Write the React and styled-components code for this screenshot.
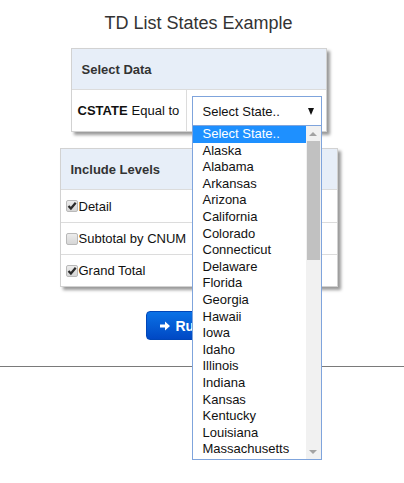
import React from "react";
import styled, { createGlobalStyle } from "styled-components";

const options = [
  "Select State..",
  "Alaska",
  "Alabama",
  "Arkansas",
  "Arizona",
  "California",
  "Colorado",
  "Connecticut",
  "Delaware",
  "Florida",
  "Georgia",
  "Hawaii",
  "Iowa",
  "Idaho",
  "Illinois",
  "Indiana",
  "Kansas",
  "Kentucky",
  "Louisiana",
  "Massachusetts",
];

const levels = [
  { label: "Detail", checked: true },
  { label: "Subtotal by CNUM", checked: false },
  { label: "Grand Total", checked: true },
];

export default function App() {
  return (
    <Page>
      <GlobalStyle />
      <Main>
        <Title>TD List States Example</Title>

        <Panel width={256}>
          <PanelHeader>Select Data</PanelHeader>
          <FieldRow>
            <LabelCell>
              <b>CSTATE</b> Equal to
            </LabelCell>
            <InputCell>
              <SelectWrap>
                <SelectBox>
                  <span>Select State..</span>
                  <Caret />
                </SelectBox>
                <Dropdown>
                  <OptionList>
                    {options.map((o, i) => (
                      <Option key={o} active={i === 0}>
                        {o}
                      </Option>
                    ))}
                  </OptionList>
                  <Scrollbar>
                    <ScrollButton>
                      <ArrowUp />
                    </ScrollButton>
                    <Track>
                      <Thumb />
                    </Track>
                    <ScrollButton>
                      <ArrowDown />
                    </ScrollButton>
                  </Scrollbar>
                </Dropdown>
              </SelectWrap>
            </InputCell>
          </FieldRow>
        </Panel>

        <Panel width={278} spaced>
          <PanelHeader>Include Levels</PanelHeader>
          {levels.map((l) => (
            <CheckRow key={l.label}>
              <CheckBox>
                {l.checked && (
                  <svg width="10" height="10" viewBox="0 0 10 10">
                    <path
                      d="M1.5 5 L3.9 7.5 L8.7 1.8"
                      fill="none"
                      stroke="#2b2b2b"
                      strokeWidth="2.2"
                    />
                  </svg>
                )}
              </CheckBox>
              {l.label}
            </CheckRow>
          ))}
        </Panel>

        <RunButton>
          <svg width="12" height="12" viewBox="0 0 12 12">
            <path d="M1 4.5 H6 V1.5 L11 6 L6 10.5 V7.5 H1 Z" fill="#fff" />
          </svg>
          Run
        </RunButton>
      </Main>
      <Rule />
    </Page>
  );
}

const GlobalStyle = createGlobalStyle`
  body {
    margin: 0;
    background: #fff;
    font-family: "Liberation Sans", Arial, sans-serif;
    color: #111;
  }
`;

const Page = styled.div`
  min-height: 483px;
`;

const Main = styled.div`
  display: flex;
  flex-direction: column;
  align-items: center;
  padding: 12px 7px 0 0;
`;

const Title = styled.h1`
  margin: 0 0 14px;
  font-size: 18px;
  font-weight: normal;
  line-height: 22px;
  color: #333;
`;

const Panel = styled.div`
  width: ${(p) => p.width}px;
  box-sizing: border-box;
  margin-top: ${(p) => (p.spaced ? "16px" : "0")};
  border: 1px solid #d2d2d2;
  background: #fff;
  box-shadow: 3px 3px 3px rgba(0, 0, 0, 0.4);
  font-size: 13px;
`;

const PanelHeader = styled.div`
  height: 41px;
  box-sizing: border-box;
  display: flex;
  align-items: center;
  padding-left: 10px;
  background: #e7eef8;
  border-bottom: 1px solid #dcdcdc;
  font-weight: bold;
  color: #333;
`;

const FieldRow = styled.div`
  display: flex;
  height: 41px;
`;

const LabelCell = styled.div`
  width: 115px;
  box-sizing: border-box;
  display: flex;
  align-items: center;
  gap: 4px;
  padding-left: 6px;
  border-right: 1px solid #dcdcdc;
  color: #111;
`;

const InputCell = styled.div`
  flex: 1;
  padding: 6px 4px 5px 5px;
`;

const SelectWrap = styled.div`
  position: relative;
`;

const SelectBox = styled.div`
  height: 30px;
  box-sizing: border-box;
  display: flex;
  align-items: center;
  justify-content: space-between;
  padding: 0 7px 0 10px;
  border: 1px solid #7fa4dc;
  background: #fff;
  color: #111;
`;

const Caret = styled.span`
  width: 0;
  height: 0;
  border-left: 3.5px solid transparent;
  border-right: 3.5px solid transparent;
  border-top: 7px solid #111;
`;

const Dropdown = styled.div`
  position: absolute;
  top: 100%;
  left: 0;
  right: 0;
  z-index: 10;
  height: 334px;
  box-sizing: border-box;
  display: flex;
  border: 1px solid #7fa4dc;
  border-top: none;
  background: #fff;
`;

const OptionList = styled.div`
  flex: 1;
  overflow: hidden;
`;

const Option = styled.div`
  height: 16.6px;
  line-height: 16.6px;
  padding-left: 10px;
  white-space: nowrap;
  background: ${(p) => (p.active ? "#1e90ff" : "transparent")};
  color: ${(p) => (p.active ? "#fff" : "#111")};
`;

const Scrollbar = styled.div`
  width: 15px;
  display: flex;
  flex-direction: column;
  background: #f1f1f1;
`;

const ScrollButton = styled.div`
  height: 15px;
  display: flex;
  align-items: center;
  justify-content: center;
`;

const ArrowUp = styled.span`
  width: 0;
  height: 0;
  border-left: 4px solid transparent;
  border-right: 4px solid transparent;
  border-bottom: 4px solid #a3a3a3;
`;

const ArrowDown = styled.span`
  width: 0;
  height: 0;
  border-left: 4px solid transparent;
  border-right: 4px solid transparent;
  border-top: 4px solid #a3a3a3;
`;

const Track = styled.div`
  flex: 1;
  padding: 0 1px;
`;

const Thumb = styled.div`
  height: 119px;
  background: #c1c1c1;
`;

const CheckRow = styled.div`
  height: 32px;
  box-sizing: border-box;
  display: flex;
  align-items: center;
  padding-left: 5px;
  border-top: 1px solid #dcdcdc;
  color: #111;

  &:nth-of-type(2) {
    border-top: none;
  }
`;

const CheckBox = styled.span`
  width: 12px;
  height: 12px;
  margin-right: 1px;
  box-sizing: border-box;
  display: flex;
  align-items: center;
  justify-content: center;
  border: 1px solid #b9b9b9;
  border-radius: 2px;
  background: linear-gradient(#ececec, #d6d6d6);
`;

const RunButton = styled.button`
  margin-top: 24px;
  width: 106px;
  height: 29px;
  box-sizing: border-box;
  display: flex;
  align-items: center;
  gap: 5px;
  padding: 0 12px;
  border: 1px solid #0046b8;
  border-radius: 4px;
  background: linear-gradient(#0b72e6, #0048c4);
  color: #fff;
  font-family: "Liberation Sans", Arial, sans-serif;
  font-size: 14px;
  font-weight: bold;
`;

const Rule = styled.hr`
  margin: 26px 0 0;
  border: none;
  border-top: 1px solid #7a7a7a;
`;
